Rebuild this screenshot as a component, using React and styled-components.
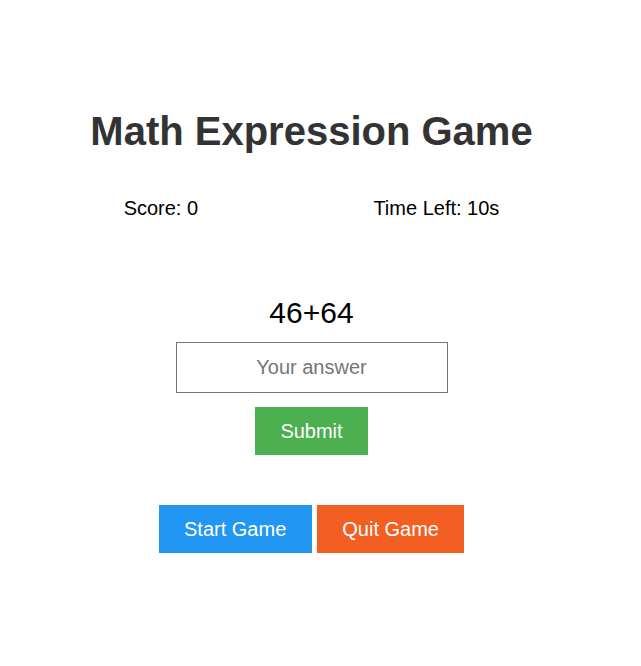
import React from "react";
import styled, { createGlobalStyle } from "styled-components";

const Global = createGlobalStyle`
  html, body { margin: 0; padding: 0; background: #fff; }
  body { font-family: "Liberation Sans", Arial, sans-serif; }
`;

const Page = styled.div`
  width: 623px;
  padding-top: 108px;
  display: flex;
  flex-direction: column;
  align-items: center;
  font-family: "Liberation Sans", Arial, sans-serif;
`;

const Title = styled.h1`
  margin: 0;
  font-size: 40px;
  line-height: 46px;
  font-weight: bold;
  color: #333;
`;

const Stats = styled.div`
  align-self: stretch;
  margin: 43px 36px 0;
  display: flex;
  justify-content: space-around;
  font-size: 20px;
  line-height: 23px;
  color: #000;
`;

const Expression = styled.div`
  margin-top: 75px;
  font-size: 30px;
  line-height: 35px;
  color: #000;
`;

const AnswerInput = styled.input`
  box-sizing: border-box;
  margin-top: 12px;
  width: 272px;
  height: 51px;
  padding: 0 10px;
  border: 1px solid #767676;
  border-radius: 0;
  font-family: "Liberation Sans", Arial, sans-serif;
  font-size: 20px;
  text-align: center;
  outline: none;
  &::placeholder { color: #757575; }
`;

const Button = styled.button`
  box-sizing: border-box;
  height: 48px;
  padding: 0 25.5px;
  border: none;
  border-radius: 0;
  background: ${(p) => p.$bg};
  color: #fff;
  font-family: "Liberation Sans", Arial, sans-serif;
  font-size: 20px;
  cursor: pointer;
`;

const SubmitButton = styled(Button)`
  margin-top: 14px;
`;

const Controls = styled.div`
  margin-top: 50px;
  display: flex;
  gap: 5px;
`;

export default function App() {
  return (
    <>
      <Global />
      <Page>
        <Title>Math Expression Game</Title>
        <Stats>
          <span>Score: 0</span>
          <span>Time Left: 10s</span>
        </Stats>
        <Expression>46+64</Expression>
        <AnswerInput placeholder="Your answer" />
        <SubmitButton $bg="#4CAF50">Submit</SubmitButton>
        <Controls>
          <Button $bg="#2196F3">Start Game</Button>
          <Button $bg="#F35E22">Quit Game</Button>
        </Controls>
      </Page>
    </>
  );
}
